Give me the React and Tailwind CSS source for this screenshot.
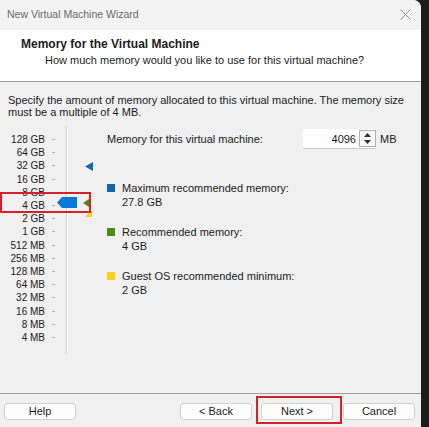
const labels = [
  "128 GB", "64 GB", "32 GB", "16 GB", "8 GB", "4 GB", "2 GB", "1 GB",
  "512 MB", "256 MB", "128 MB", "64 MB", "32 MB", "16 MB", "8 MB", "4 MB",
];

const Legend = ({ color, title, value }) => (
  <div className="flex items-start gap-[7px]">
    <span className={`mt-[3px] w-[8px] h-[8px] ${color}`} />
    <div className="leading-[14px]">
      <div>{title}</div>
      <div>{value}</div>
    </div>
  </div>
);

const Button = ({ children, className = "" }) => (
  <button className={`h-[17px] w-[72px] bg-[#fdfdfd] border border-[#d0d0d0] rounded-[3px] text-[11px] leading-none text-[#1b1b1b] ${className}`}>
    {children}
  </button>
);

export default function App() {
  return (
    <div
      className="w-[429px] h-[427px] bg-[#1c1c1c] flex overflow-hidden text-[#1b1b1b]"
      style={{ fontFamily: '"Liberation Sans", Arial, sans-serif' }}
    >
      <div className="w-[421px] h-full bg-[#f0f0f0] rounded-tr-[8px] flex flex-col overflow-hidden">
        {/* title bar */}
        <div className="h-[30px] bg-[#f3f3f3] flex items-center justify-between pl-[7px] pr-[8px]">
          <span className="text-[10.5px] text-[#6a6a6a]">New Virtual Machine Wizard</span>
          <svg width="11" height="11" viewBox="0 0 11 11" className="mr-[2px] mb-[2px]">
            <path d="M0.5 0.5L10.5 10.5M10.5 0.5L0.5 10.5" stroke="#8a8a8a" strokeWidth="1" />
          </svg>
        </div>

        {/* header */}
        <div className="h-[52px] bg-white border-b border-[#a0a0a0] pt-[7px] pl-[21px]">
          <div className="text-[12px] font-bold leading-[14px]">Memory for the Virtual Machine</div>
          <div className="text-[11px] leading-[14px] pl-[24px] mt-[2px]">
            How much memory would you like to use for this virtual machine?
          </div>
        </div>

        {/* body */}
        <div className="flex-1 px-[8px] pt-[12px] text-[11px]">
          <p className="leading-[12px]">
            Specify the amount of memory allocated to this virtual machine. The memory size
            must be a multiple of 4 MB.
          </p>

          <div className="flex mt-[15px]">
            {/* slider */}
            <div className="relative w-[92px] flex">
              <div className="w-[37px] flex flex-col items-end">
                {labels.map((l) => (
                  <div key={l} className="h-[13.2px] flex items-center text-[10px] whitespace-nowrap">
                    {l}
                  </div>
                ))}
              </div>
              <div className="w-[10px] flex flex-col items-end">
                {labels.map((l) => (
                  <div key={l} className="h-[13.2px] flex items-center">
                    <span className="w-[3px] h-px bg-[#b4b4b4]" />
                  </div>
                ))}
              </div>
              <div className="ml-[11px] -mt-[7px] h-[228px] w-[2px] border-l border-[#d4d4d4] bg-white" />

              {/* max recommended marker */}
              <svg className="absolute left-[77px] top-[29px]" width="8" height="9" viewBox="0 0 8 9">
                <path d="M0 4.5L8 0V9Z" fill="#1368b4" />
              </svg>
              {/* thumb */}
              <svg className="absolute left-[49px] top-[64px]" width="20" height="11" viewBox="0 0 20 11">
                <path d="M0 5.5L5 0H20V11H5Z" fill="#0a78d7" />
              </svg>
              {/* recommended */}
              <svg className="absolute left-[75px] top-[66px]" width="6" height="8" viewBox="0 0 6 8">
                <path d="M0 4L6 0V8Z" fill="#4d8a1a" />
              </svg>
              {/* guest minimum */}
              <svg className="absolute left-[77px] top-[77px]" width="7" height="7" viewBox="0 0 7 7">
                <path d="M0 7L7 0V7Z" fill="#f5cf1a" />
              </svg>
              {/* annotation */}
              <div className="absolute -left-[8px] top-[59px] w-[91px] h-[21px] border-2 border-[#d3222a]" />
            </div>

            {/* right column */}
            <div className="ml-[7px] flex-1">
              <div className="flex items-center h-[20px] -mt-[4px]">
                <span className="w-[196px]">Memory for this virtual machine:</span>
                <div className="flex h-[20px] w-[73px] bg-white border-b border-[#c8c8c8]">
                  <span className="flex-1 text-right pr-[3px] leading-[20px]">4096</span>
                  <div className="w-[17px] flex flex-col justify-center items-center border border-[#b0b0b0] my-[1px] bg-[#f7f7f7]">
                    <svg width="7" height="4" viewBox="0 0 7 4" className="mb-[3px]">
                      <path d="M0 4L3.5 0L7 4Z" fill="#333" />
                    </svg>
                    <svg width="7" height="4" viewBox="0 0 7 4">
                      <path d="M0 0L3.5 4L7 0Z" fill="#333" />
                    </svg>
                  </div>
                </div>
                <span className="ml-[4px]">MB</span>
              </div>

              <div className="mt-[32px] flex flex-col gap-[16px]">
                <Legend color="bg-[#1566b0]" title="Maximum recommended memory:" value="27.8 GB" />
                <Legend color="bg-[#4a8c1a]" title="Recommended memory:" value="4 GB" />
                <Legend color="bg-[#fcd116]" title="Guest OS recommended minimum:" value="2 GB" />
              </div>
            </div>
          </div>
        </div>

        {/* footer */}
        <div className="border-t border-[#a0a0a0] h-[34px] flex items-start pt-[9px] pl-[4px] pr-[6px]">
          <Button>Help</Button>
          <div className="flex-1" />
          <Button>&lt; Back</Button>
          <div className="relative ml-[9px] flex">
            <Button>Next &gt;</Button>
            <div className="absolute -left-[5px] -top-[7px] w-[86px] h-[28px] border-2 border-[#d3222a]" />
          </div>
          <Button className="ml-[10px]">Cancel</Button>
        </div>
      </div>
    </div>
  );
}
